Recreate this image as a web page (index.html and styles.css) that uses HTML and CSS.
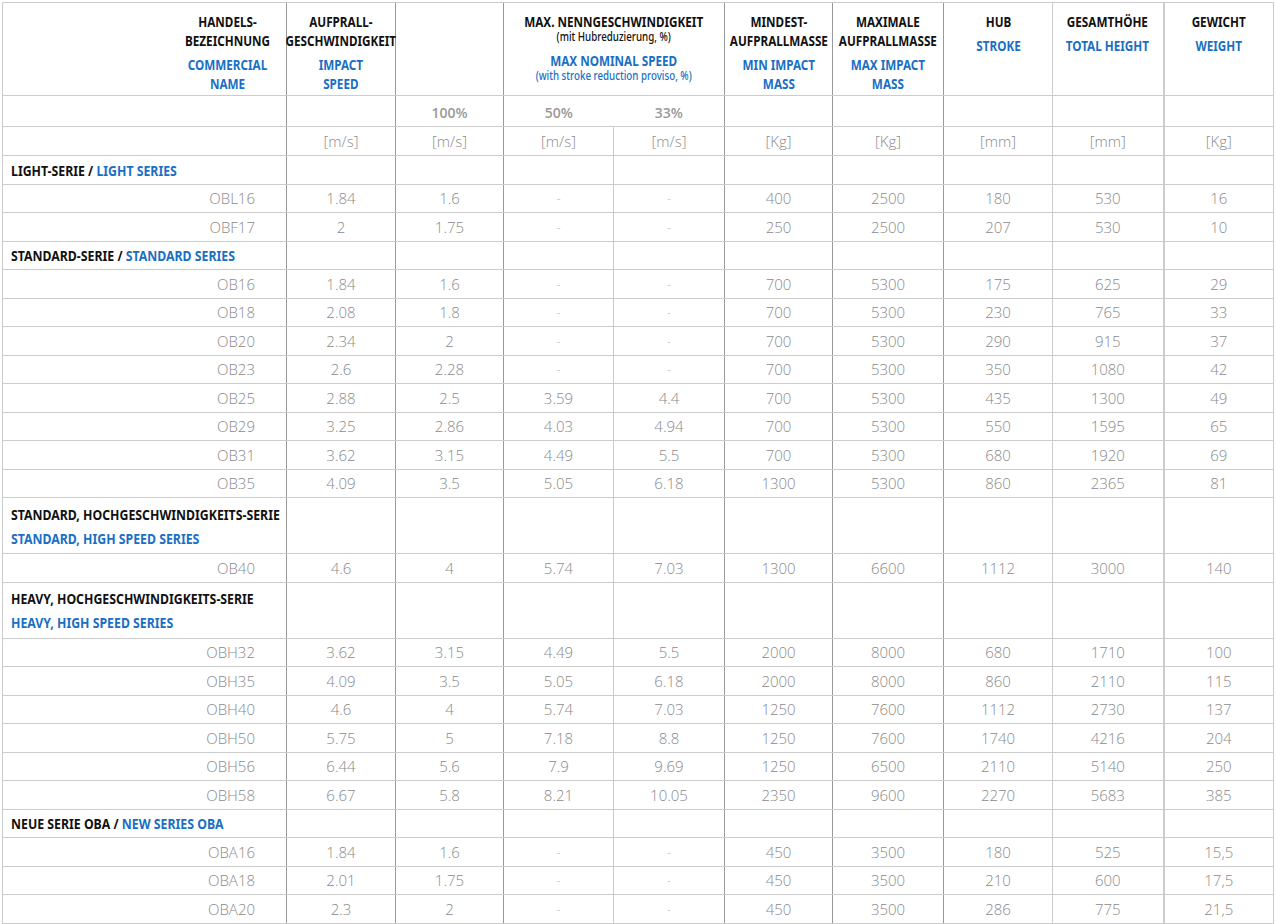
FILE: index.html
```html
<!DOCTYPE html>
<html lang="de">
<head>
<meta charset="utf-8">
<title>Puffer Tabelle</title>
<link rel="stylesheet" href="styles.css">
</head>
<body>
<table class="spec">
  <colgroup>
    <col class="c1"><col class="c2"><col class="c3"><col class="c4"><col class="c5">
    <col class="c6"><col class="c7"><col class="c8"><col class="c9"><col class="c10">
  </colgroup>
  <thead>
    <tr class="head">
      <th class="name-h"><div class="hw"><div class="hb"><div class="de">HANDELS-<br>BEZEICHNUNG</div><div class="en">COMMERCIAL<br>NAME</div></div></div></th>
      <th><div class="hw"><div class="hb"><div class="de">AUFPRALL-<br>GESCHWINDIGKEIT</div><div class="en">IMPACT<br>SPEED</div></div></div></th>
      <th></th>
      <th colspan="2" class="max"><div class="hw"><div class="hb"><div class="de">MAX. NENNGESCHWINDIGKEIT</div><div class="sub">(mit Hubreduzierung, %)</div><div class="en">MAX NOMINAL SPEED</div><div class="sub en-sub">(with stroke reduction proviso, %)</div></div></div></th>
      <th><div class="hw"><div class="hb"><div class="de">MINDEST-<br>AUFPRALLMASSE</div><div class="en">MIN IMPACT<br>MASS</div></div></div></th>
      <th><div class="hw"><div class="hb"><div class="de">MAXIMALE<br>AUFPRALLMASSE</div><div class="en">MAX IMPACT<br>MASS</div></div></div></th>
      <th><div class="hw"><div class="hb"><div class="de">HUB</div><div class="en">STROKE</div></div></div></th>
      <th><div class="hw"><div class="hb"><div class="de">GESAMTHÖHE</div><div class="en">TOTAL HEIGHT</div></div></div></th>
      <th><div class="hw"><div class="hb"><div class="de">GEWICHT</div><div class="en">WEIGHT</div></div></div></th>
    </tr>
    <tr class="pct">
      <td></td><td></td><td>100%</td><td class="nosep">50%</td><td>33%</td><td></td><td></td><td></td><td></td><td></td>
    </tr>
    <tr class="units">
      <td></td><td>[m/s]</td><td>[m/s]</td><td>[m/s]</td><td>[m/s]</td><td>[Kg]</td><td>[Kg]</td><td>[mm]</td><td>[mm]</td><td>[Kg]</td>
    </tr>
  </thead>
  <tbody>
    <tr class="sec"><td class="sec-t"><span class="st">LIGHT-SERIE / <span class="blue">LIGHT SERIES</span></span></td><td></td><td></td><td></td><td></td><td></td><td></td><td></td><td></td><td></td></tr>
    <tr class="row"><td class="nm">OBL16</td><td>1.84</td><td>1.6</td><td class="d">-</td><td class="d">-</td><td>400</td><td>2500</td><td>180</td><td>530</td><td>16</td></tr>
    <tr class="row"><td class="nm">OBF17</td><td>2</td><td>1.75</td><td class="d">-</td><td class="d">-</td><td>250</td><td>2500</td><td>207</td><td>530</td><td>10</td></tr>

    <tr class="sec"><td class="sec-t"><span class="st">STANDARD-SERIE / <span class="blue">STANDARD SERIES</span></span></td><td></td><td></td><td></td><td></td><td></td><td></td><td></td><td></td><td></td></tr>
    <tr class="row"><td class="nm">OB16</td><td>1.84</td><td>1.6</td><td class="d">-</td><td class="d">-</td><td>700</td><td>5300</td><td>175</td><td>625</td><td>29</td></tr>
    <tr class="row"><td class="nm">OB18</td><td>2.08</td><td>1.8</td><td class="d">-</td><td class="d">-</td><td>700</td><td>5300</td><td>230</td><td>765</td><td>33</td></tr>
    <tr class="row"><td class="nm">OB20</td><td>2.34</td><td>2</td><td class="d">-</td><td class="d">-</td><td>700</td><td>5300</td><td>290</td><td>915</td><td>37</td></tr>
    <tr class="row"><td class="nm">OB23</td><td>2.6</td><td>2.28</td><td class="d">-</td><td class="d">-</td><td>700</td><td>5300</td><td>350</td><td>1080</td><td>42</td></tr>
    <tr class="row"><td class="nm">OB25</td><td>2.88</td><td>2.5</td><td>3.59</td><td>4.4</td><td>700</td><td>5300</td><td>435</td><td>1300</td><td>49</td></tr>
    <tr class="row"><td class="nm">OB29</td><td>3.25</td><td>2.86</td><td>4.03</td><td>4.94</td><td>700</td><td>5300</td><td>550</td><td>1595</td><td>65</td></tr>
    <tr class="row"><td class="nm">OB31</td><td>3.62</td><td>3.15</td><td>4.49</td><td>5.5</td><td>700</td><td>5300</td><td>680</td><td>1920</td><td>69</td></tr>
    <tr class="row"><td class="nm">OB35</td><td>4.09</td><td>3.5</td><td>5.05</td><td>6.18</td><td>1300</td><td>5300</td><td>860</td><td>2365</td><td>81</td></tr>

    <tr class="sec sec2"><td class="sec-t"><span class="st">STANDARD, HOCHGESCHWINDIGKEITS-SERIE<br><span class="blue">STANDARD, HIGH SPEED SERIES</span></span></td><td></td><td></td><td></td><td></td><td></td><td></td><td></td><td></td><td></td></tr>
    <tr class="row"><td class="nm">OB40</td><td>4.6</td><td>4</td><td>5.74</td><td>7.03</td><td>1300</td><td>6600</td><td>1112</td><td>3000</td><td>140</td></tr>

    <tr class="sec sec2"><td class="sec-t"><span class="st">HEAVY, HOCHGESCHWINDIGKEITS-SERIE<br><span class="blue">HEAVY, HIGH SPEED SERIES</span></span></td><td></td><td></td><td></td><td></td><td></td><td></td><td></td><td></td><td></td></tr>
    <tr class="row"><td class="nm">OBH32</td><td>3.62</td><td>3.15</td><td>4.49</td><td>5.5</td><td>2000</td><td>8000</td><td>680</td><td>1710</td><td>100</td></tr>
    <tr class="row"><td class="nm">OBH35</td><td>4.09</td><td>3.5</td><td>5.05</td><td>6.18</td><td>2000</td><td>8000</td><td>860</td><td>2110</td><td>115</td></tr>
    <tr class="row"><td class="nm">OBH40</td><td>4.6</td><td>4</td><td>5.74</td><td>7.03</td><td>1250</td><td>7600</td><td>1112</td><td>2730</td><td>137</td></tr>
    <tr class="row"><td class="nm">OBH50</td><td>5.75</td><td>5</td><td>7.18</td><td>8.8</td><td>1250</td><td>7600</td><td>1740</td><td>4216</td><td>204</td></tr>
    <tr class="row"><td class="nm">OBH56</td><td>6.44</td><td>5.6</td><td>7.9</td><td>9.69</td><td>1250</td><td>6500</td><td>2110</td><td>5140</td><td>250</td></tr>
    <tr class="row"><td class="nm">OBH58</td><td>6.67</td><td>5.8</td><td>8.21</td><td>10.05</td><td>2350</td><td>9600</td><td>2270</td><td>5683</td><td>385</td></tr>

    <tr class="sec"><td class="sec-t"><span class="st">NEUE SERIE OBA / <span class="blue">NEW SERIES OBA</span></span></td><td></td><td></td><td></td><td></td><td></td><td></td><td></td><td></td><td></td></tr>
    <tr class="row"><td class="nm">OBA16</td><td>1.84</td><td>1.6</td><td class="d">-</td><td class="d">-</td><td>450</td><td>3500</td><td>180</td><td>525</td><td>15,5</td></tr>
    <tr class="row"><td class="nm">OBA18</td><td>2.01</td><td>1.75</td><td class="d">-</td><td class="d">-</td><td>450</td><td>3500</td><td>210</td><td>600</td><td>17,5</td></tr>
    <tr class="row"><td class="nm">OBA20</td><td>2.3</td><td>2</td><td class="d">-</td><td class="d">-</td><td>450</td><td>3500</td><td>286</td><td>775</td><td>21,5</td></tr>
  </tbody>
</table>
</body>
</html>
```

FILE: styles.css
```css
html, body {
  margin: 0;
  padding: 0;
  background: #ffffff;
}
body {
  padding: 2px 0 0 2px;
}
.spec {
  border-collapse: collapse;
  table-layout: fixed;
  width: 1271px;
  font-family: "Open Sans", "Liberation Sans", sans-serif;
  font-weight: 300;
  font-size: 15px;
  color: #8a8a8a;
  border: 1px solid #cccccc;
}
col { border-right: 1px solid #999999; }
.c1 { width: 284px; }
.c2 { width: 109px; }
.c3 { width: 108px; }
.c4 { width: 110px; border-right-color: #cccccc; }
.c5 { width: 111px; }
.c6 { width: 108px; }
.c7 { width: 111px; }
.c8 { width: 109px; border-right-color: #cccccc; }
.c9 { width: 111px; border-right: 2px solid #cccccc; }
.c10 { width: 110px; border-right-color: #cccccc; }

.spec th, .spec td {
  border-top: 1px solid #cccccc;
  border-bottom: 1px solid #cccccc;
  padding: 0;
  text-align: center;
  vertical-align: middle;
}
.head { height: 93px; }
.head th {
  vertical-align: top;
  padding: 9px 0 0;
  font-family: "Noto Sans", "DejaVu Sans", sans-serif;
  font-weight: 700;
  font-size: 15px;
  line-height: 19px;
  color: #111111;
}
.hw {
  display: flex;
  justify-content: center;
}
.hb {
  text-align: center;
  white-space: nowrap;
  transform: scaleX(0.78);
  transform-origin: center top;
}
.en { color: #1a6fc4; margin-top: 5px; }
.sub { font-size: 12.5px; line-height: 11px; font-weight: 500; }
.max .en { margin-top: 9px; }
.en-sub { margin-top: 0; color: #1a6fc4; }
.name-h .hw { justify-content: flex-end; padding-right: 16px; }
.name-h .hb { transform-origin: right top; }

.pct { height: 31px; }
.pct td {
  font-weight: 600;
  font-size: 14px;
  padding-top: 2px;
  color: #999999;
}
.pct td.nosep { border-right: hidden; }
.units { height: 29px; }

.row { height: 28.5px; }
.d { color: #bbbbbb; font-size: 13px; }
.nm { text-align: right !important; padding-right: 31px !important; }

.sec { height: 28.5px; }
.sec2 { height: 56px; }
.sec-t {
  text-align: left !important;
  padding-left: 8px !important;
  font-family: "Noto Sans", "DejaVu Sans", sans-serif;
  font-weight: 700;
  font-size: 15px;
  line-height: 24px;
  color: #111111;
  white-space: nowrap;
}
.st {
  display: inline-block;
  transform: scaleX(0.82);
  transform-origin: left center;
}
.blue { color: #1a6fc4; }
```
